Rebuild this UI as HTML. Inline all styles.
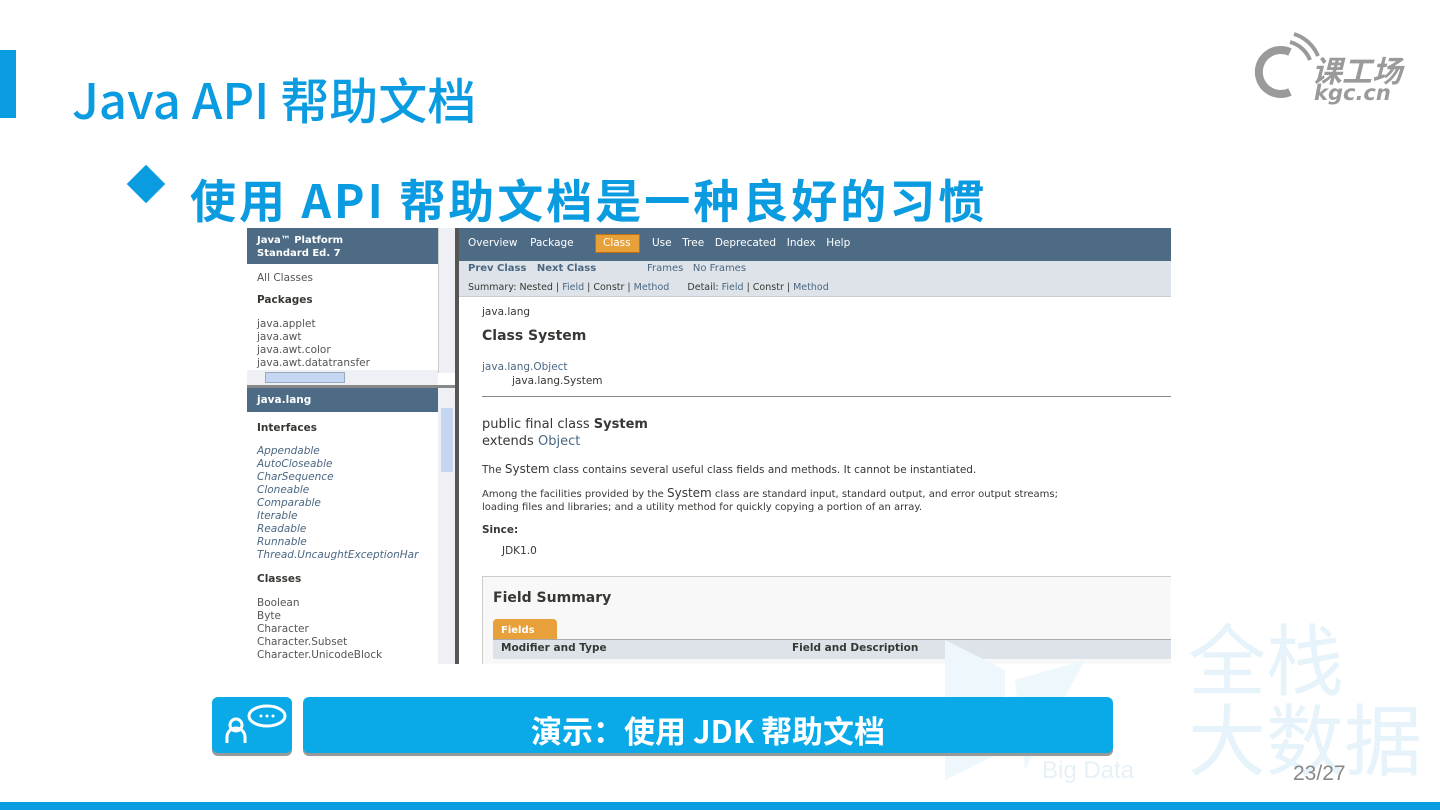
<!DOCTYPE html>
<html><head><meta charset="utf-8"><style>
*{margin:0;padding:0;box-sizing:border-box}
body{width:1440px;height:810px;position:relative;overflow:hidden;background:#fff;font-family:"Liberation Sans","Noto Sans CJK SC",sans-serif}
.a{position:absolute;white-space:nowrap}
.s{font-family:"DejaVu Sans","Liberation Sans",sans-serif;font-size:10.5px;color:#353833}
.lf{color:#555}
.lk{color:#4a6782}
.b{font-weight:bold}
</style></head><body>
<div class="a" style="left:0;top:50px;width:16px;height:68px;background:#0a9be0"></div>
<div class="a" style="left:72px;top:66px;font-size:49px;color:#0a9be0;font-family:'Noto Sans CJK SC',sans-serif;font-weight:500;line-height:66px">Java API 帮助文档</div>
<div class="a" style="left:130px;top:168px;width:32px;height:32px;background:#0a9be0;transform:rotate(45deg) scale(.85)"></div>
<div class="a" style="left:190px;top:166px;font-size:46px;font-weight:bold;color:#0a9be0;font-family:'Noto Sans CJK SC',sans-serif;letter-spacing:3px;line-height:66px">使用 API 帮助文档是一种良好的习惯</div>
<!-- logo -->
<svg class="a" style="left:1250px;top:28px" width="170" height="80" viewBox="0 0 170 80">
<path d="M40 24 A22 22 0 1 0 40 64" fill="none" stroke="#9a9a9a" stroke-width="8"/>
<path d="M40 14 A30 30 0 0 1 60 32" fill="none" stroke="#9a9a9a" stroke-width="4"/>
<path d="M44 6 A38 38 0 0 1 68 28" fill="none" stroke="#9a9a9a" stroke-width="4"/>
<text x="62" y="54" font-size="30" font-weight="bold" fill="#9a9a9a" font-family="Noto Sans CJK SC" font-style="italic">课工场</text>
<text x="64" y="72" font-size="21" font-weight="bold" fill="#9a9a9a" font-family="DejaVu Sans" font-style="italic">kgc.cn</text>
</svg>
<!-- screenshot -->
<div class="a" style="left:247px;top:228px;width:924px;height:436px;background:#fff;overflow:hidden">
 <div class="a" style="left:0;top:0;width:191px;height:36px;background:#4d6b85"></div>
 <div class="a s b" style="left:10px;top:6px;color:#fff;font-size:10px;line-height:13px">Java™ Platform<br>Standard Ed. 7</div>
 <div class="a s lf" style="left:10px;top:44px">All Classes</div>
 <div class="a s b" style="left:10px;top:66px">Packages</div>
 <div class="a s lf" style="left:10px;top:90px;line-height:13px">java.applet<br>java.awt<br>java.awt.color<br>java.awt.datatransfer</div>
 <div class="a" style="left:191px;top:0;width:17px;height:145px;background:#eef0f5;border-left:1px solid #ccc"></div>
 <div class="a" style="left:0;top:142px;width:191px;height:15px;background:#eef0f5"></div>
 <div class="a" style="left:18px;top:144px;width:80px;height:11px;background:#c5d6f2;border:1px solid #9ab"></div>
 <div class="a" style="left:0;top:157px;width:208px;height:3px;background:#888"></div>
 <div class="a" style="left:0;top:160px;width:191px;height:24px;background:#4d6b85"></div>
 <div class="a s b" style="left:10px;top:166px;color:#fff">java.lang</div>
 <div class="a s b" style="left:10px;top:194px">Interfaces</div>
 <div class="a s lk" style="left:10px;top:217px;line-height:13px;font-style:italic">Appendable<br>AutoCloseable<br>CharSequence<br>Cloneable<br>Comparable<br>Iterable<br>Readable<br>Runnable<br>Thread.UncaughtExceptionHar</div>
 <div class="a s b" style="left:10px;top:345px">Classes</div>
 <div class="a s lf" style="left:10px;top:369px;line-height:13px">Boolean<br>Byte<br>Character<br>Character.Subset<br>Character.UnicodeBlock</div>
 <div class="a" style="left:191px;top:160px;width:17px;height:276px;background:#eef0f5"></div>
 <div class="a" style="left:194px;top:180px;width:12px;height:64px;background:#c5d6f2"></div>
 <div class="a" style="left:208px;top:0;width:4px;height:436px;background:#555"></div>
 <!-- right -->
 <div class="a" style="left:212px;top:0;width:712px;height:33px;background:#4d6b85"></div>
 <div class="a s" style="left:221px;top:9px;color:#fff;word-spacing:3px">Overview&nbsp; Package</div>
 <div class="a" style="left:348px;top:6px;width:45px;height:19px;background:#e8a03a;border:1px solid #c07010"></div>
 <div class="a s" style="left:356px;top:9px;color:#fff">Class</div>
 <div class="a s" style="left:405px;top:9px;color:#fff;word-spacing:2px">Use&nbsp; Tree&nbsp; Deprecated&nbsp; Index&nbsp; Help</div>
 <div class="a" style="left:212px;top:33px;width:712px;height:36px;background:#dee3e9;border-bottom:1px solid #ccc"></div>
 <div class="a s b lk" style="left:221px;top:35px;font-size:10px">Prev Class&nbsp;&nbsp; Next Class</div>
 <div class="a s lk" style="left:400px;top:35px;font-size:10px">Frames&nbsp;&nbsp; No Frames</div>
 <div class="a s" style="left:221px;top:54px;font-size:9.5px">Summary: Nested | <span class="lk">Field</span> | Constr | <span class="lk">Method</span>&nbsp;&nbsp;&nbsp;&nbsp;&nbsp; Detail: <span class="lk">Field</span> | Constr | <span class="lk">Method</span></div>
 <div class="a s" style="left:235px;top:78px">java.lang</div>
 <div class="a s b" style="left:235px;top:100px;font-size:14px">Class System</div>
 <div class="a s lk" style="left:235px;top:133px">java.lang.Object</div>
 <div class="a s" style="left:265px;top:147px">java.lang.System</div>
 <div class="a" style="left:235px;top:168px;width:689px;height:1px;background:#888"></div>
 <div class="a s" style="left:235px;top:188px;font-size:13px;line-height:17px">public final class <b>System</b><br>extends <span class="lk">Object</span></div>
 <div class="a s" style="left:235px;top:234px">The <span style="font-size:12px">System</span> class contains several useful class fields and methods. It cannot be instantiated.</div>
 <div class="a s" style="left:235px;top:259px;line-height:13px;font-size:10px">Among the facilities provided by the <span style="font-size:12px">System</span> class are standard input, standard output, and error output streams;<br>loading files and libraries; and a utility method for quickly copying a portion of an array.</div>
 <div class="a s b" style="left:235px;top:296px">Since:</div>
 <div class="a s" style="left:255px;top:317px">JDK1.0</div>
 <div class="a" style="left:235px;top:348px;width:700px;height:100px;border:1px solid #ccc;background:#f8f8f8"></div>
 <div class="a s b" style="left:246px;top:362px;font-size:14px">Field Summary</div>
 <div class="a" style="left:246px;top:391px;width:64px;height:20px;background:#e8a03a;border-radius:4px 4px 0 0"></div>
 <div class="a s b" style="left:254px;top:397px;color:#fff;font-size:10px">Fields</div>
 <div class="a" style="left:246px;top:411px;width:680px;height:20px;background:#dee3e9;border-top:1px solid #aaa"></div>
 <div class="a s b" style="left:254px;top:414px">Modifier and Type</div>
 <div class="a s b" style="left:545px;top:414px">Field and Description</div>
</div>
<!-- watermark -->
<div class="a" style="left:1188px;top:622px;font-size:78px;color:#e6f3fa;line-height:80px">全栈<br>大数据</div>
<svg class="a" style="left:945px;top:640px" width="200" height="150"><path d="M0 0 L60 30 L60 110 L0 140Z M70 40 L140 20 L80 130Z" fill="#eef7fc"/></svg>
<div class="a" style="left:1042px;top:757px;font-size:24px;color:#e6f1f7">Big Data</div>
<div class="a" style="left:1293px;top:762px;font-size:21px;color:#888">23/27</div>
<!-- demo bar -->
<div class="a" style="left:212px;top:697px;width:80px;height:56px;background:#0aaae8;border-radius:6px;box-shadow:0 3px 0 #999"></div>
<svg class="a" style="left:222px;top:703px" width="66" height="40"><circle cx="14" cy="22" r="6" fill="none" stroke="#fff" stroke-width="3"/><path d="M5 40 V34 a9 9 0 0 1 18 0 V40" fill="none" stroke="#fff" stroke-width="3"/><ellipse cx="45" cy="13" rx="18" ry="10" fill="#0aaae8" stroke="#fff" stroke-width="3"/><circle cx="39" cy="13" r="1.5" fill="#fff"/><circle cx="45" cy="13" r="1.5" fill="#fff"/><circle cx="51" cy="13" r="1.5" fill="#fff"/></svg>
<div class="a" style="left:303px;top:697px;width:810px;height:56px;background:#0aaae8;border-radius:6px;box-shadow:0 3px 0 #999"></div>
<div class="a" style="left:303px;top:707px;width:810px;text-align:center;font-size:31px;color:#fff;font-weight:bold;font-family:'Noto Sans CJK SC',sans-serif">演示：使用 JDK 帮助文档</div>
<div class="a" style="left:0;top:802px;width:1440px;height:8px;background:#0a9be0"></div>
</body></html>
